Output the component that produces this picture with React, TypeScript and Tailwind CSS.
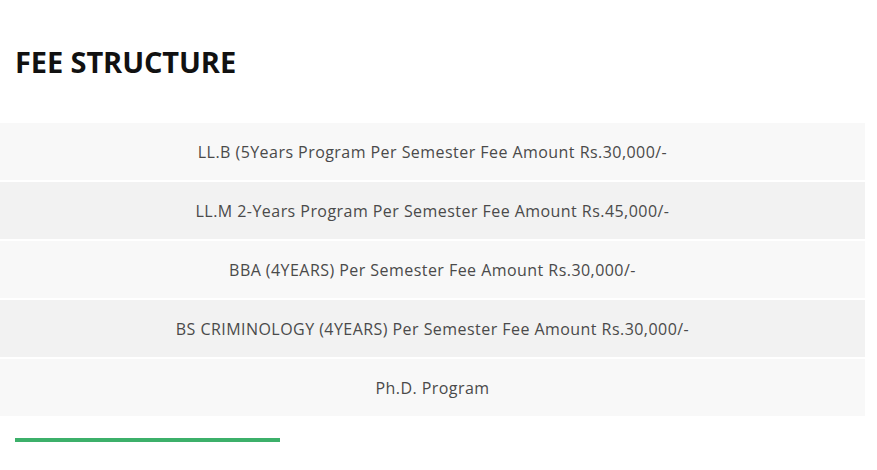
const rows = [
  "LL.B (5Years Program Per Semester Fee Amount Rs.30,000/-",
  "LL.M 2-Years Program Per Semester Fee Amount Rs.45,000/-",
  "BBA (4YEARS) Per Semester Fee Amount Rs.30,000/-",
  "BS CRIMINOLOGY (4YEARS) Per Semester Fee Amount Rs.30,000/-",
  "Ph.D. Program",
];

export default function App() {
  return (
    <div className="w-[877px] h-[470px] bg-white font-['Open_Sans',sans-serif]">
      <div className="w-[865px] pt-[42px]">
        <h2 className="px-[15px] text-[29px] leading-[40px] font-bold text-[#111111] tracking-[-0.1px]">
          FEE STRUCTURE
        </h2>
        <div className="mt-[41px] flex flex-col gap-[2px]">
          {rows.map((row, i) => (
            <div
              key={row}
              className={`h-[57px] flex items-center justify-center text-[16px] tracking-[0.45px] text-[#4a4a4a] ${
                i % 2 === 0 ? "bg-[#f8f8f8]" : "bg-[#f2f2f2]"
              }`}
            >
              {row}
            </div>
          ))}
        </div>
        <div className="ml-[15px] mt-[22px] w-[265px] h-[4px] bg-[#3cb06a]" />
      </div>
    </div>
  );
}
